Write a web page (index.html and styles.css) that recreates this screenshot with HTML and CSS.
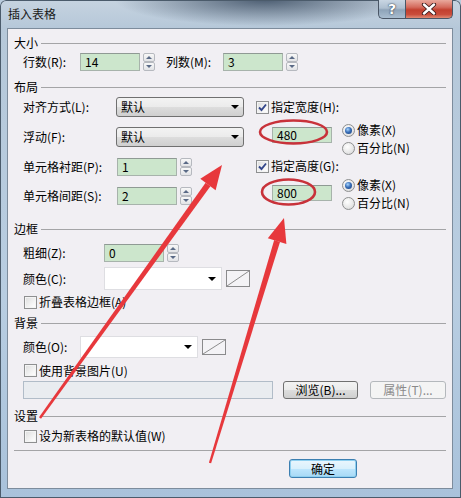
FILE: index.html
```html
<!DOCTYPE html>
<html lang="zh-CN">
<head>
<meta charset="utf-8">
<title>插入表格</title>
<link rel="stylesheet" href="styles.css">
</head>
<body>
<div class="window">
  <div class="titlebar">
    <span class="title">插入表格</span>
    <div class="caption">
      <div class="cap-btn help">?</div>
      <div class="cap-btn close">
        <svg width="16" height="12" viewBox="0 0 16 12"><path d="M3 1.5 L13 10.5 M13 1.5 L3 10.5" stroke="#3a1a1a" stroke-width="4.2" stroke-linecap="round"/><path d="M3 1.5 L13 10.5 M13 1.5 L3 10.5" stroke="#ffffff" stroke-width="2.4" stroke-linecap="round"/></svg>
      </div>
    </div>
  </div>

  <div class="client">
    <div class="group-head">大小</div>
    <div class="row size-row">
      <span class="label w57">行数(R):</span>
      <span class="field w60 h18">14</span>
      <span class="spin"><i class="sp-up"></i><i class="sp-dn"></i></span>
      <span class="label w57 gap11">列数(M):</span>
      <span class="field w60 h18">3</span>
      <span class="spin"><i class="sp-up"></i><i class="sp-dn"></i></span>
    </div>

    <div class="group-head mt8">布局</div>
    <div class="layout">
      <div class="layout-left">
        <div class="lrow"><span class="label w93">对齐方式(L):</span><span class="combo">默认<b class="tri"></b></span></div>
        <div class="lrow"><span class="label w93">浮动(F):</span><span class="combo">默认<b class="tri"></b></span></div>
        <div class="lrow"><span class="label w94">单元格衬距(P):</span><span class="field w60 h18">1</span><span class="spin gap3"><i class="sp-up"></i><i class="sp-dn"></i></span></div>
        <div class="lrow"><span class="label w94">单元格间距(S):</span><span class="field w60 h18">2</span><span class="spin gap3"><i class="sp-up"></i><i class="sp-dn"></i></span></div>
      </div>
      <div class="layout-right">
        <div class="cb-row h20"><span class="chk on"><svg width="11" height="11" viewBox="0 0 11 11"><path d="M2 5.5 L4.5 8 L9 2.5" stroke="#33468a" stroke-width="1.9" fill="none"/></svg></span><span class="cb-text">指定宽度(H):</span></div>
        <div class="dim-block mt4">
          <span class="field w60 h16 dim-field first">480</span>
          <div class="radios">
            <div class="radio-row"><span class="radio on"></span><span class="cb-text">像素(X)</span></div>
            <div class="radio-row"><span class="radio"></span><span class="cb-text">百分比(N)</span></div>
          </div>
        </div>
        <div class="cb-row h18"><span class="chk on"><svg width="11" height="11" viewBox="0 0 11 11"><path d="M2 5.5 L4.5 8 L9 2.5" stroke="#33468a" stroke-width="1.9" fill="none"/></svg></span><span class="cb-text">指定高度(G):</span></div>
        <div class="dim-block mt1">
          <span class="field w60 h16 dim-field second">800</span>
          <div class="radios">
            <div class="radio-row"><span class="radio on"></span><span class="cb-text">像素(X)</span></div>
            <div class="radio-row"><span class="radio"></span><span class="cb-text">百分比(N)</span></div>
          </div>
        </div>
      </div>
    </div>

    <div class="group-head mt9">边框</div>
    <div class="row h18 mt7">
      <span class="label w81">粗细(Z):</span>
      <span class="field w60 h18">0</span>
      <span class="spin gap4"><i class="sp-up"></i><i class="sp-dn"></i></span>
    </div>
    <div class="row h23 mt5">
      <span class="label w81">颜色(C):</span>
      <span class="combo-white h23"><b class="tri"></b></span>
      <span class="swatch h17"><svg width="22" height="15" viewBox="0 0 22 15" preserveAspectRatio="none"><path d="M0 15 L22 0" stroke="#8c8c8c" stroke-width="1"/></svg></span>
    </div>
    <div class="row cb-line h16 mt4"><span class="chk"></span><span class="cb-text">折叠表格边框(A)</span></div>

    <div class="group-head mt5">背景</div>
    <div class="row h22 mt5">
      <span class="label w57">颜色(O):</span>
      <span class="combo-white h22"><b class="tri"></b></span>
      <span class="swatch h16"><svg width="22" height="14" viewBox="0 0 22 14" preserveAspectRatio="none"><path d="M0 14 L22 0" stroke="#8c8c8c" stroke-width="1"/></svg></span>
    </div>
    <div class="row cb-line h17 mt4"><span class="chk"></span><span class="cb-text">使用背景图片(U)</span></div>
    <div class="row h18 mt2">
      <span class="path-field"></span>
      <span class="btn browse">浏览(B)...</span>
      <span class="btn disabled">属性(T)...</span>
    </div>

    <div class="group-head mt9">设置</div>
    <div class="row cb-line h16 mt4"><span class="chk"></span><span class="cb-text">设为新表格的默认值(W)</span></div>

    <div class="separator"></div>
    <div class="button-row">
      <span class="btn default">确定</span>
    </div>
  </div>

  <svg class="annot" width="461" height="498" viewBox="0 0 461 498">
    <ellipse cx="293.5" cy="132" rx="33.5" ry="11.5" fill="none" stroke="#c8323a" stroke-width="2.6"/>
    <ellipse cx="288.5" cy="192" rx="26.5" ry="12.5" fill="none" stroke="#c8323a" stroke-width="2.6"/>
    <polygon points="39,417.3 41,418.7 210.4,186.3 205.6,182.7" fill="#e7383c"/>
    <polygon points="222,165 215.6,190.3 200.3,178.8" fill="#e7383c"/>
    <polygon points="208.9,462.7 211.1,463.3 280,241.9 274.2,240.1" fill="#e7383c"/>
    <polygon points="284,218 286.4,244 267.8,238.3" fill="#e7383c"/>
  </svg>
</div>
</body>
</html>
```

FILE: styles.css
```css
* { box-sizing: border-box; margin: 0; padding: 0; }

html, body {
  width: 461px;
  height: 498px;
  overflow: hidden;
}

body {
  font-family: "Noto Sans CJK SC", "Noto Sans", sans-serif;
  font-size: 12px;
  color: #000;
  background: #b9cbdd;
}

.window {
  position: relative;
  width: 461px;
  height: 498px;
  padding: 0 8px 9px 7px;
  display: flex;
  flex-direction: column;
  background:
    radial-gradient(ellipse 150px 26px at 265px 0px, rgba(48, 66, 88, 0.8), rgba(48, 66, 88, 0) 100%),
    linear-gradient(to bottom, #c6d3e0 0px, #b6c8d9 28px, #b8cde1 300px, #a9c2db 100%);
  box-shadow: inset 0 0 0 1px #4b5b6b;
  border-radius: 6px 6px 0 0;
}

/* title bar */
.titlebar {
  height: 28px;
  display: flex;
  align-items: flex-start;
}
.title {
  margin: 6px 0 0 1px;
  line-height: 16px;
  color: #1a1a1a;
}
.caption {
  margin-left: auto;
  display: flex;
  height: 19px;
}
.cap-btn {
  height: 19px;
  display: flex;
  align-items: center;
  justify-content: center;
  border: 1px solid #4a5666;
  border-top: none;
}
.help {
  width: 27px;
  border-right: none;
  border-radius: 0 0 0 5px;
  background: linear-gradient(to bottom, #c9d6e3 0%, #aebfd0 45%, #8ea3b8 55%, #a9bdd0 100%);
  color: #fff;
  font-family: "DejaVu Sans", sans-serif;
  font-weight: bold;
  font-size: 14px;
  line-height: 19px;
  text-shadow: 0 0 2px #2c3a4a, 0 0 1px #2c3a4a;
}
.close {
  width: 48px;
  border-radius: 0 0 5px 0;
  background: linear-gradient(to bottom, #e9a99d 0%, #d46a5c 40%, #c2402f 55%, #c94c3a 80%, #e08a74 100%);
}

/* client area */
.client {
  flex: 1;
  border: 1px solid #7d8c9c;
  background: #f1eff3;
  padding: 6px 6px 0 6px;
  display: flex;
  flex-direction: column;
}

.group-head {
  height: 16px;
  line-height: 16px;
  display: flex;
  align-items: center;
}
.group-head::after {
  content: "";
  flex: 1;
  height: 1px;
  margin-left: 3px;
  background: #a4a4a6;
}

.row {
  display: flex;
  align-items: center;
  padding-left: 9px;
}
.size-row { height: 18px; margin-top: 2px; }

.label { line-height: 16px; white-space: nowrap; flex: none; }
.w57 { width: 57px; }
.w81 { width: 81px; }
.w93 { width: 93px; }
.w94 { width: 94px; }
.gap11 { margin-left: 11px; }
.gap3 { margin-left: 3px; }
.gap4 { margin-left: 4px; }

.mt1 { margin-top: 1px; }
.mt2 { margin-top: 2px; }
.mt4 { margin-top: 4px; }
.mt5 { margin-top: 5px; }
.mt7 { margin-top: 7px; }
.mt8 { margin-top: 8px; }
.mt9 { margin-top: 9px; }
.h16 { height: 16px; }
.h17 { height: 17px; }
.h18 { height: 18px; }
.h20 { height: 20px; }
.h22 { height: 22px; }
.h23 { height: 23px; }

.field {
  display: flex;
  align-items: center;
  flex: none;
  padding-left: 4px;
  background: #cce6cc;
  border: 1px solid #a7b3ab;
  border-top-color: #8f9a94;
  font-size: 12px;
  line-height: 14px;
}
.w60 { width: 60px; }

.spin {
  display: flex;
  flex-direction: column;
  width: 12px;
  height: 18px;
  margin-left: 3px;
  flex: none;
}
.spin i {
  flex: 1;
  position: relative;
  border: 1px solid #b6b9bf;
  border-radius: 2px;
  background: linear-gradient(to bottom, #f8f8f8, #e2e3e6);
}
.spin i::after {
  content: "";
  position: absolute;
  left: 2px;
  top: 2px;
  border-left: 3px solid transparent;
  border-right: 3px solid transparent;
}
.sp-up::after { border-bottom: 3px solid #5a6a86; }
.sp-dn::after { border-top: 3px solid #5a6a86; }

/* combo boxes */
.combo {
  width: 128px;
  height: 20px;
  display: flex;
  align-items: center;
  padding: 0 4px 0 4px;
  border: 1px solid #707070;
  border-radius: 3px;
  background: linear-gradient(to bottom, #f3f3f3 0%, #ebebeb 50%, #dddddd 51%, #cfcfcf 100%);
  line-height: 16px;
  flex: none;
}
.tri {
  margin-left: auto;
  width: 0;
  height: 0;
  border-left: 4px solid transparent;
  border-right: 4px solid transparent;
  border-top: 4px solid #000;
}
.combo-white {
  width: 118px;
  display: flex;
  align-items: center;
  padding-right: 5px;
  background: #fff;
  border: 1px solid #dedee2;
  flex: none;
}
.swatch {
  width: 24px;
  margin-left: 4px;
  border: 1px solid #8a8a8c;
  background: #f4f3f6;
  display: flex;
  flex: none;
}
.swatch svg { display: block; }

/* layout group */
.layout {
  display: flex;
  align-items: flex-start;
  padding-left: 9px;
  margin-top: 2px;
}
.layout-left {
  width: 221px;
  display: grid;
  grid-template-rows: 20px 20px 19px 19px;
  row-gap: 10px;
  flex: none;
}
.lrow { display: flex; align-items: center; }
.layout-right {
  margin-left: 12px;
  display: flex;
  flex-direction: column;
}
.cb-row { display: flex; align-items: center; }
.dim-block { display: flex; align-items: flex-start; }
.dim-field { margin-left: 16px; }
.dim-field.first { margin-top: 6px; }
.dim-field.second { margin-top: 9px; }
.radios { margin-left: 10px; display: flex; flex-direction: column; }
.radio-row { height: 18px; display: flex; align-items: center; }

.chk {
  width: 13px;
  height: 13px;
  flex: none;
  border: 1px solid #8e8f90;
  background: linear-gradient(135deg, #dcdcdc 0%, #f7f7f7 70%, #ffffff 100%);
  box-shadow: inset 0 0 0 1px #f4f4f4;
  display: flex;
  align-items: center;
  justify-content: center;
}
.chk svg { display: block; }
.cb-text { margin-left: 2px; line-height: 16px; white-space: nowrap; }
.cb-line { padding-left: 10px; }

.radio {
  width: 13px;
  height: 13px;
  flex: none;
  border-radius: 50%;
  border: 1px solid #8e8f90;
  background: radial-gradient(circle at 40% 35%, #ffffff 0%, #e6e6e6 60%, #cfcfcf 100%);
  display: flex;
  align-items: center;
  justify-content: center;
}
.radio.on::after {
  content: "";
  width: 7px;
  height: 7px;
  border-radius: 50%;
  background: radial-gradient(circle at 40% 35%, #a9d6ff 0%, #3a6fb8 45%, #153a78 100%);
}

/* path + buttons */
.path-field {
  width: 250px;
  height: 18px;
  border: 1px solid #b1bcc8;
  background: #e9ecf0;
  flex: none;
}
.btn {
  display: flex;
  align-items: center;
  justify-content: center;
  height: 18px;
  border-radius: 3px;
  line-height: 16px;
  flex: none;
}
.browse {
  width: 75px;
  margin-left: 10px;
  border: 1px solid #707070;
  background: linear-gradient(to bottom, #f3f3f3 0%, #ebebeb 50%, #dddddd 51%, #cfcfcf 100%);
}
.disabled {
  width: 76px;
  margin-left: 12px;
  border: 1px solid #b4b8bc;
  background: #f4f4f4;
  color: #8a8a8a;
}

.separator {
  margin-top: 6px;
  height: 1px;
  background: #a4a4a6;
}
.button-row {
  display: flex;
  justify-content: flex-end;
  padding-right: 89px;
  margin-top: 8px;
}
.default {
  width: 68px;
  height: 19px;
  border: 1px solid #3c7fb1;
  background: linear-gradient(to bottom, #eaf6fd 0%, #d9f0fc 50%, #bee6fd 51%, #a7d9f5 100%);
  box-shadow: inset 0 0 0 1px #8fd0f0;
}

/* annotation overlay */
.annot {
  position: absolute;
  left: 0;
  top: 0;
  pointer-events: none;
}
```
